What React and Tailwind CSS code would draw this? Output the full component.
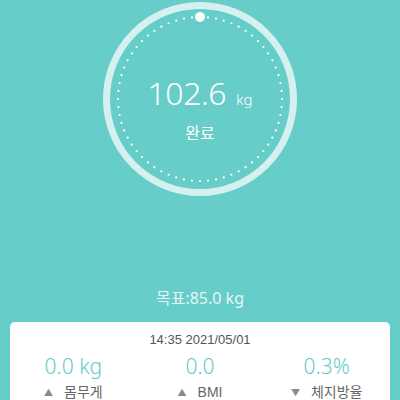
import React from 'react';

const DOTS = 64;

function Dial() {
  const dots = [];
  for (let i = 1; i < DOTS; i += 1) {
    const a = (i / DOTS) * Math.PI * 2;
    dots.push(
      <circle key={i} cx={97 + 82 * Math.sin(a)} cy={97 - 82 * Math.cos(a)} r="1.1" fill="#ffffff" />
    );
  }
  return (
    <div className="relative mx-auto mt-[2px] h-[194px] w-[194px]">
      <svg className="absolute inset-0" width="194" height="194" viewBox="0 0 194 194">
        <circle cx="97" cy="97" r="93.5" fill="none" stroke="#d4f1f0" strokeWidth="7" />
        {dots}
        <circle cx="97" cy="15" r="5" fill="#ffffff" />
      </svg>
      <div className="relative flex h-full flex-col items-center pt-[75px] text-white">
        <div className="flex items-baseline leading-none">
          <span className="text-[32px] font-light tracking-[-0.5px]">102.6</span>
          <span className="ml-[10px] text-[15px] font-light">kg</span>
        </div>
        <div className="mt-[16px] text-[16px] leading-none">완료</div>
      </div>
    </div>
  );
}

const stats = [
  { value: '0.0 kg', label: '몸무게', up: true },
  { value: '0.0', label: 'BMI', up: true },
  { value: '0.3%', label: '체지방율', up: false },
];

export default function App() {
  return (
    <div
      className="h-[400px] w-[400px] overflow-hidden bg-[#67cdc9]"
      style={{ fontFamily: '"Noto Sans", "Noto Sans CJK KR", sans-serif' }}
    >
      <Dial />
      <div className="mt-[94px] text-center text-[16px] leading-none text-[#e4f6f5]">목표:85.0 kg</div>
      <div className="mx-[10px] mt-[16px] h-[120px] rounded-[5px] bg-white pt-[11px]">
        <div
          className="text-center text-[13px] leading-none text-[#555555]"
          style={{ fontFamily: '"Liberation Sans", Arial, sans-serif' }}
        >
          14:35 2021/05/01
        </div>
        <div className="mt-[10px] grid grid-cols-3">
          {stats.map((s) => (
            <div key={s.label} className="flex flex-col items-center">
              <div className="text-[21px] font-light leading-none text-[#66cbc8]">{s.value}</div>
              <div className="mt-[7px] flex h-[16px] items-center text-[14px] leading-none text-[#666666]">
                <span className="mr-[11px] text-[9px] text-[#8a8a8a]">{s.up ? '▲' : '▼'}</span>
                <span style={{ fontFamily: '"Liberation Sans", "Noto Sans CJK KR", sans-serif' }}>{s.label}</span>
              </div>
            </div>
          ))}
        </div>
      </div>
    </div>
  );
}
